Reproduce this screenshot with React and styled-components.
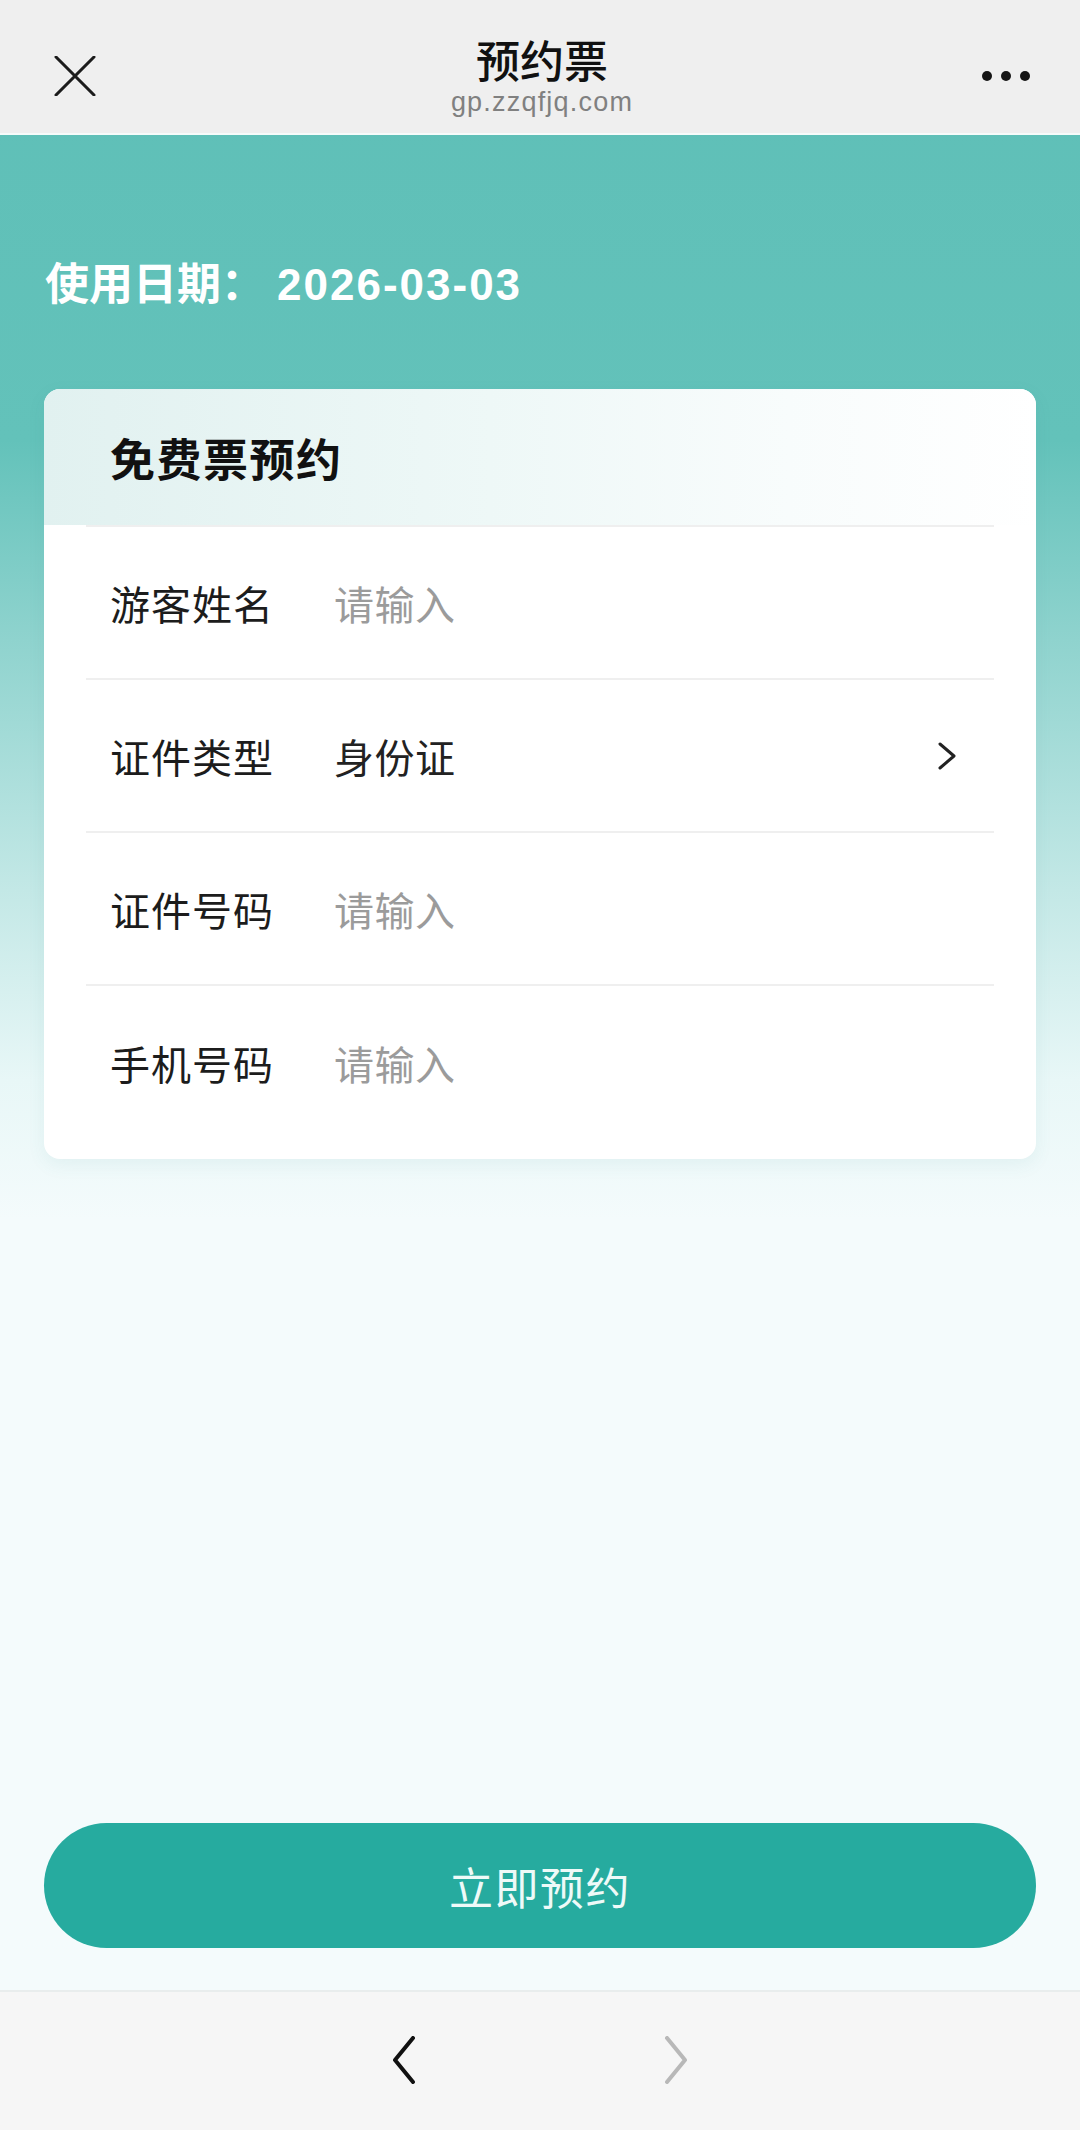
import styled, { createGlobalStyle } from "styled-components"

const fields = [
    { label: "游客姓名", placeholder: "请输入" },
    { label: "证件类型", value: "身份证", select: true },
    { label: "证件号码", placeholder: "请输入" },
    { label: "手机号码", placeholder: "请输入" },
]

function Chevron({ dir = "right", color = "#222", w = 20, h = 28, stroke = 3 }) {
    const d = dir === "right" ? `M3 2 L${w - 3} ${h / 2} L3 ${h - 2}` : `M${w - 3} 2 L3 ${h / 2} L${w - 3} ${h - 2}`
    return (
        <svg width={w} height={h} viewBox={`0 0 ${w} ${h}`} fill="none">
            <path d={d} stroke={color} strokeWidth={stroke} strokeLinecap="round" strokeLinejoin="round" />
        </svg>
    )
}

function FieldRow({ label, placeholder, value, select }) {
    return (
        <Row>
            <Label>{label}</Label>
            {select ? <Value>{value}</Value> : <Input placeholder={placeholder} />}
            {select && <Chevron />}
        </Row>
    )
}

export default function App() {
    return (
        <>
            <GlobalStyle />
            <Page>
                <TopBar>
                    <IconButton aria-label="close">
                        <svg width="42" height="40" viewBox="0 0 42 40">
                            <path d="M2 1 L40 39 M40 1 L2 39" stroke="#1b1b1b" strokeWidth="3" strokeLinecap="round" />
                        </svg>
                    </IconButton>
                    <TitleBlock>
                        <Title>预约票</Title>
                        <Url>gp.zzqfjq.com</Url>
                    </TitleBlock>
                    <Dots>
                        <span /><span /><span />
                    </Dots>
                </TopBar>

                <Main>
                    <DateLine>使用日期：<DateValue>2026-03-03</DateValue></DateLine>
                    <Card>
                        <CardHeader>免费票预约</CardHeader>
                        <Rows>
                            {fields.map(f => <FieldRow key={f.label} {...f} />)}
                        </Rows>
                    </Card>
                    <SubmitButton>立即预约</SubmitButton>
                </Main>

                <BottomBar>
                    <NavButton aria-label="back"><Chevron dir="left" color="#111" w={24} h={48} stroke={4} /></NavButton>
                    <NavButton aria-label="forward"><Chevron dir="right" color="#b8b8b8" w={24} h={48} stroke={4} /></NavButton>
                </BottomBar>
            </Page>
        </>
    )
}

const GlobalStyle = createGlobalStyle`
body{
    margin: 0;
    font-family: "Noto Sans CJK SC", "Noto Sans", sans-serif;
    background: #f4fbfc;
}
*{
    box-sizing: border-box;
}
`

const Page = styled.div`
width: 1080px;
min-height: 2130px;
display: flex;
flex-direction: column;
background: linear-gradient(180deg, #5ebfb7 0px, #63c2ba 440px, #8fd3ce 640px, #c3e8e6 890px, #e8f7f7 1080px, #f4fbfc 1220px, #f4fbfc 100%);
`

const TopBar = styled.header`
height: 135px;
background: #efefef;
border-bottom: 2px solid #f6fbfa;
display: grid;
grid-template-columns: 1fr auto 1fr;
align-items: start;
padding: 0 50px 0 54px;
`

const IconButton = styled.button`
justify-self: start;
margin-top: 56px;
padding: 0;
border: none;
background: none;
display: flex;
`

const TitleBlock = styled.div`
display: flex;
flex-direction: column;
align-items: center;
padding-top: 36px;
`

const Title = styled.h1`
margin: 0;
font-size: 44px;
line-height: 46px;
font-weight: 500;
color: #111;
`

const Url = styled.p`
margin: 6px 0 0;
font-family: "Liberation Sans", Arial, sans-serif;
font-size: 27px;
line-height: 28px;
letter-spacing: 1.2px;
color: #808080;
`

const Dots = styled.div`
justify-self: end;
margin-top: 71px;
display: flex;
gap: 9px;
    span{
        width: 10px;
        height: 10px;
        border-radius: 50%;
        background: #151515;
    }
`

const Main = styled.main`
flex: 1;
display: flex;
flex-direction: column;
padding: 0 44px 42px;
`

const DateLine = styled.h2`
margin: 120px 0 0 1px;
font-size: 44px;
line-height: 52px;
font-weight: 700;
color: #ffffff;
`

const DateValue = styled.span`
padding-left: 12px;
font-family: "Liberation Sans", Arial, sans-serif;
letter-spacing: 2px;
`

const Card = styled.section`
margin-top: 78px;
background: #ffffff;
border-radius: 16px;
overflow: hidden;
padding-bottom: 20px;
box-shadow: 0 6px 18px rgba(60, 140, 135, 0.08);
`

const CardHeader = styled.h3`
margin: 0;
height: 136px;
display: flex;
align-items: center;
padding-left: 66px;
font-size: 45px;
letter-spacing: 1.5px;
font-weight: 700;
color: #111;
background: linear-gradient(90deg, #e1f1f0 0%, #eef8f7 45%, #f8fcfc 75%, #ffffff 100%);
`

const Rows = styled.div`
margin: 0 42px;
border-top: 2px solid #efefef;
`

const Row = styled.div`
height: 153px;
display: flex;
align-items: center;
padding: 0 37px 0 24px;
border-bottom: 2px solid #efefef;
&:last-child{
    border-bottom: none;
}
`

const Label = styled.span`
width: 224px;
flex-shrink: 0;
font-size: 40px;
letter-spacing: 1px;
color: #1c1c1c;
`

const Value = styled.span`
flex: 1;
font-size: 40px;
letter-spacing: 0.5px;
color: #222;
`

const Input = styled.input`
flex: 1;
min-width: 0;
border: none;
outline: none;
padding: 0;
background: transparent;
font-family: "Noto Sans CJK SC", sans-serif;
font-size: 40px;
letter-spacing: 0.5px;
color: #222;
&::placeholder{
    color: #9b9b9b;
}
`

const SubmitButton = styled.button`
margin-top: auto;
height: 125px;
border: none;
border-radius: 63px;
background: #26ab9f;
color: #eefaf8;
font-family: "Noto Sans CJK SC", sans-serif;
font-size: 44px;
letter-spacing: 1.5px;
`

const BottomBar = styled.footer`
height: 140px;
background: #f6f6f6;
border-top: 2px solid #e9eded;
display: flex;
justify-content: center;
align-items: flex-start;
padding-top: 44px;
gap: 248px;
`

const NavButton = styled.button`
padding: 0;
border: none;
background: none;
display: flex;
`
